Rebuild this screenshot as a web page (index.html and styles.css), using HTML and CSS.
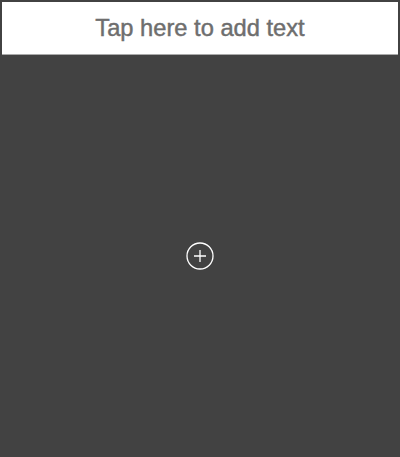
FILE: index.html
```html
<!DOCTYPE html>
<html>
<head>
<meta charset="utf-8">
<link rel="stylesheet" href="styles.css">
</head>
<body>
<div class="screen">
  <div class="header">Tap here to add text</div>
  <div class="canvas">
    <svg class="add" width="28" height="28" viewBox="0 0 28 28">
      <circle cx="14" cy="14" r="13" fill="none" stroke="#fff" stroke-width="1.3"/>
      <path d="M14 8v12M8 14h12" stroke="#fff" stroke-width="1.3" fill="none"/>
    </svg>
  </div>
</div>
</body>
</html>
```
FILE: styles.css
```css
html, body {
  margin: 0;
  padding: 0;
  background: #424242;
}
.screen {
  width: 400px;
  height: 457px;
  display: flex;
  flex-direction: column;
  padding: 2px;
  box-sizing: border-box;
}
.header {
  height: 53px;
  flex: none;
  background: #fff;
  border-bottom: 1px solid #aaaaaa;
  color: #6e6e6e;
  font-family: "Liberation Sans", Arial, sans-serif;
  font-size: 23.7px;
  -webkit-text-stroke: 0.45px #6e6e6e;
  display: flex;
  align-items: center;
  justify-content: center;
  padding-top: 1px;
  box-sizing: border-box;
}
.canvas {
  flex: 1;
  display: flex;
  align-items: center;
  justify-content: center;
  padding-top: 2px;
}
.add {
  display: block;
}
```
